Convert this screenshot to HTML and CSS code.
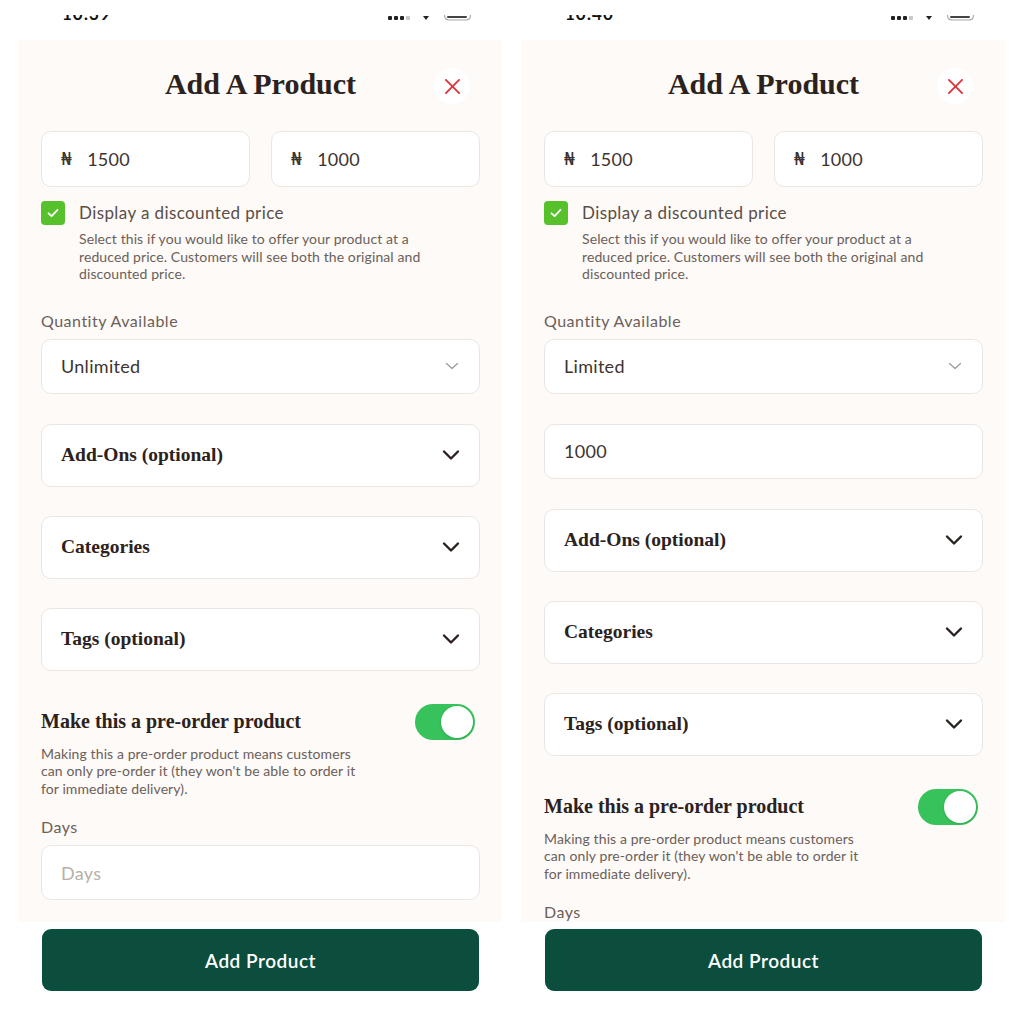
FILE: index.html
```html
<!DOCTYPE html>
<html>
<head>
<meta charset="UTF-8">
<title>Add A Product</title>
<link rel="stylesheet" href="styles.css">
</head>
<body>

<div class="screens">

   <!-- first screen: unlimited quantity -->
   <div class="screen">
      <div class="status">
         <div class="clock-clip"><span class="clock">10:39</span></div>
         <svg class="status-icons" width="90" height="22" viewBox="0 0 90 22">
            <rect x="0" y="16" width="4" height="4" rx="1" fill="#222"/>
            <rect x="6" y="16" width="4" height="4" rx="1" fill="#222"/>
            <rect x="12" y="16" width="4" height="4" rx="1" fill="#222"/>
            <rect x="18" y="16" width="4" height="4" rx="1" fill="#c8c8c8"/>
            <path d="M35 16 L41 16 L38 20 Z" fill="#222"/>
            <path d="M56.5 15 Q56.5 20 61 20 L78 20 Q82.5 20 82.5 15" fill="none" stroke="#aaa" stroke-width="1.2"/>
            <rect x="59" y="16" width="20" height="2" rx="1" fill="#444"/>
         </svg>
      </div>

      <div class="panel">
         <div class="header">
            <h1 class="title">Add A Product</h1>
            <button class="close">
               <svg width="18" height="18" viewBox="0 0 18 18"><path d="M2 2 L16 16 M16 2 L2 16" stroke="#e0353b" stroke-width="2" stroke-linecap="round"/></svg>
            </button>
         </div>

         <div class="prices">
            <div class="field"><span class="naira">₦</span>1500</div>
            <div class="field"><span class="naira">₦</span>1000</div>
         </div>

         <div class="check-row">
            <span class="checkbox">
               <svg width="14" height="14" viewBox="0 0 14 14"><path d="M2.5 7.3 L5.6 10.2 L11.5 3.8" fill="none" stroke="#fff" stroke-width="1.8" stroke-linecap="round" stroke-linejoin="round"/></svg>
            </span>
            <div>
               <div class="check-label">Display a discounted price</div>
               <p class="hint check-hint">Select this if you would like to offer your product at a reduced price. Customers will see both the original and discounted price.</p>
            </div>
         </div>

         <div class="label qty-label">Quantity Available</div>
         <div class="field select">
            <span>Unlimited</span>
            <svg width="14" height="8" viewBox="0 0 14 8"><path d="M1.5 1.5 L7 6.5 L12.5 1.5" fill="none" stroke="#9b9b9b" stroke-width="1.3" stroke-linecap="round" stroke-linejoin="round"/></svg>
         </div>

         <div class="accordion first">
            <span>Add-Ons (optional)</span>
            <svg width="18" height="12" viewBox="0 0 18 12"><path d="M2 2.5 L9 9.5 L16 2.5" fill="none" stroke="#2b2220" stroke-width="2.4" stroke-linecap="round" stroke-linejoin="round"/></svg>
         </div>
         <div class="accordion">
            <span>Categories</span>
            <svg width="18" height="12" viewBox="0 0 18 12"><path d="M2 2.5 L9 9.5 L16 2.5" fill="none" stroke="#2b2220" stroke-width="2.4" stroke-linecap="round" stroke-linejoin="round"/></svg>
         </div>
         <div class="accordion">
            <span>Tags (optional)</span>
            <svg width="18" height="12" viewBox="0 0 18 12"><path d="M2 2.5 L9 9.5 L16 2.5" fill="none" stroke="#2b2220" stroke-width="2.4" stroke-linecap="round" stroke-linejoin="round"/></svg>
         </div>

         <div class="preorder">
            <span class="preorder-title">Make this a pre-order product</span>
            <span class="toggle"><span class="knob"></span></span>
         </div>
         <p class="hint preorder-hint">Making this a pre-order product means customers can only pre-order it (they won't be able to order it for immediate delivery).</p>

         <div class="label days-label">Days</div>
         <div class="field placeholder">Days</div>
      </div>

      <button class="submit">Add Product</button>
   </div>

   <!-- second screen: limited quantity -->
   <div class="screen">
      <div class="status">
         <div class="clock-clip"><span class="clock">10:40</span></div>
         <svg class="status-icons" width="90" height="22" viewBox="0 0 90 22">
            <rect x="0" y="16" width="4" height="4" rx="1" fill="#222"/>
            <rect x="6" y="16" width="4" height="4" rx="1" fill="#222"/>
            <rect x="12" y="16" width="4" height="4" rx="1" fill="#222"/>
            <rect x="18" y="16" width="4" height="4" rx="1" fill="#c8c8c8"/>
            <path d="M35 16 L41 16 L38 20 Z" fill="#222"/>
            <path d="M56.5 15 Q56.5 20 61 20 L78 20 Q82.5 20 82.5 15" fill="none" stroke="#aaa" stroke-width="1.2"/>
            <rect x="59" y="16" width="20" height="2" rx="1" fill="#444"/>
         </svg>
      </div>

      <div class="panel">
         <div class="header">
            <h1 class="title">Add A Product</h1>
            <button class="close">
               <svg width="18" height="18" viewBox="0 0 18 18"><path d="M2 2 L16 16 M16 2 L2 16" stroke="#e0353b" stroke-width="2" stroke-linecap="round"/></svg>
            </button>
         </div>

         <div class="prices">
            <div class="field"><span class="naira">₦</span>1500</div>
            <div class="field"><span class="naira">₦</span>1000</div>
         </div>

         <div class="check-row">
            <span class="checkbox">
               <svg width="14" height="14" viewBox="0 0 14 14"><path d="M2.5 7.3 L5.6 10.2 L11.5 3.8" fill="none" stroke="#fff" stroke-width="1.8" stroke-linecap="round" stroke-linejoin="round"/></svg>
            </span>
            <div>
               <div class="check-label">Display a discounted price</div>
               <p class="hint check-hint">Select this if you would like to offer your product at a reduced price. Customers will see both the original and discounted price.</p>
            </div>
         </div>

         <div class="label qty-label">Quantity Available</div>
         <div class="field select">
            <span>Limited</span>
            <svg width="14" height="8" viewBox="0 0 14 8"><path d="M1.5 1.5 L7 6.5 L12.5 1.5" fill="none" stroke="#9b9b9b" stroke-width="1.3" stroke-linecap="round" stroke-linejoin="round"/></svg>
         </div>
         <div class="field qty-input">1000</div>

         <div class="accordion first">
            <span>Add-Ons (optional)</span>
            <svg width="18" height="12" viewBox="0 0 18 12"><path d="M2 2.5 L9 9.5 L16 2.5" fill="none" stroke="#2b2220" stroke-width="2.4" stroke-linecap="round" stroke-linejoin="round"/></svg>
         </div>
         <div class="accordion">
            <span>Categories</span>
            <svg width="18" height="12" viewBox="0 0 18 12"><path d="M2 2.5 L9 9.5 L16 2.5" fill="none" stroke="#2b2220" stroke-width="2.4" stroke-linecap="round" stroke-linejoin="round"/></svg>
         </div>
         <div class="accordion">
            <span>Tags (optional)</span>
            <svg width="18" height="12" viewBox="0 0 18 12"><path d="M2 2.5 L9 9.5 L16 2.5" fill="none" stroke="#2b2220" stroke-width="2.4" stroke-linecap="round" stroke-linejoin="round"/></svg>
         </div>

         <div class="preorder">
            <span class="preorder-title">Make this a pre-order product</span>
            <span class="toggle"><span class="knob"></span></span>
         </div>
         <p class="hint preorder-hint">Making this a pre-order product means customers can only pre-order it (they won't be able to order it for immediate delivery).</p>

         <div class="label days-label">Days</div>
         <div class="field placeholder">Days</div>
      </div>

      <button class="submit">Add Product</button>
   </div>

</div>

</body>
</html>
```

FILE: styles.css
```css
body {
   margin: 0;
   background: #fff;
   font-family: Lato, "Open Sans", sans-serif;
   color: #3d3330;
}

.screens {
   display: flex;
}

.screen {
   width: 503px;
   flex: none;
}

/* status bar, cut off at the top of the shot */
.status {
   height: 40px;
   display: flex;
   justify-content: space-between;
   padding: 0 25px 0 62px;
   box-sizing: border-box;
}

.clock-clip {
   margin-top: 15px;
   height: 6px;
   overflow: hidden;
}

.clock {
   display: block;
   margin-top: -10px;
   font-size: 17px;
   line-height: 17px;
   font-weight: 700;
   letter-spacing: 1px;
   color: #111;
}

/* scrolling sheet */
.panel {
   margin-left: 18px;
   width: 484px;
   height: 882px;
   overflow: hidden;
   background: #fdfaf7;
   padding: 28px 22px 0 23px;
   box-sizing: border-box;
}

.header {
   position: relative;
   text-align: center;
   height: 32px;
}

.title {
   margin: 0;
   font-family: "Liberation Serif", serif;
   font-weight: 700;
   font-size: 30px;
   line-height: 32px;
   color: #2b2220;
}

.close {
   position: absolute;
   right: 10px;
   top: 0;
   width: 36px;
   height: 36px;
   border: none;
   border-radius: 50%;
   background: #fff;
   display: flex;
   align-items: center;
   justify-content: center;
   padding: 0;
}

.close svg {
   width: 17px;
   height: 17px;
}

.field {
   background: #fff;
   border: 1px solid #ebe6e1;
   border-radius: 10px;
   height: 56px;
   box-sizing: border-box;
   padding: 0 19px;
   display: flex;
   align-items: center;
   font-size: 18px;
   letter-spacing: 0.3px;
   color: #3d3330;
}

.prices {
   display: flex;
   gap: 21px;
   margin-top: 31px;
}

.prices .field {
   flex: 1;
}

.naira {
   font-family: "DejaVu Sans", sans-serif;
   font-size: 17px;
   color: #3d3330;
   margin-right: 15px;
}

.check-row {
   display: flex;
   gap: 14px;
   margin-top: 14px;
}

.checkbox {
   flex: none;
   width: 24px;
   height: 24px;
   border-radius: 4px;
   background: #56c12a;
   display: flex;
   align-items: center;
   justify-content: center;
}

.check-label {
   font-size: 17px;
   line-height: 24px;
   letter-spacing: 0.4px;
   color: #5a4e48;
}

.hint {
   margin: 5px 0 0;
   font-size: 14px;
   line-height: 17.5px;
   letter-spacing: 0.1px;
   color: #6b605a;
}

.check-hint {
   width: 362px;
}

.label {
   font-size: 16px;
   line-height: 20px;
   letter-spacing: 0.5px;
   color: #6b605a;
}

.qty-label {
   margin-top: 28px;
}

.select {
   margin-top: 8px;
   height: 55px;
   justify-content: space-between;
}

.select svg {
   margin-right: 1px;
}

.qty-input {
   margin-top: 30px;
   height: 55px;
}

.accordion {
   background: #fff;
   border: 1px solid #ebe6e1;
   border-radius: 10px;
   height: 63px;
   box-sizing: border-box;
   padding: 0 19px;
   margin-top: 29px;
   display: flex;
   align-items: center;
   justify-content: space-between;
   font-family: "Liberation Serif", serif;
   font-weight: 700;
   font-size: 19.5px;
   color: #2b2220;
}

.accordion.first {
   margin-top: 30px;
}

.preorder {
   margin-top: 33px;
   height: 36px;
   display: flex;
   align-items: center;
   justify-content: space-between;
}

.preorder-title {
   font-family: "Liberation Serif", serif;
   font-weight: 700;
   font-size: 20px;
   color: #2b2220;
}

.toggle {
   width: 60px;
   height: 36px;
   border-radius: 18px;
   background: #38c25c;
   margin-right: 5px;
   display: flex;
   align-items: center;
   justify-content: flex-end;
   padding: 2px;
   box-sizing: border-box;
}

.knob {
   width: 32px;
   height: 32px;
   border-radius: 50%;
   background: #fff;
   box-shadow: 0 1px 3px rgba(0, 0, 0, 0.15);
}

.preorder-hint {
   width: 334px;
}

.days-label {
   margin-top: 20px;
}

.placeholder {
   margin-top: 8px;
   height: 55px;
   color: #b8afa9;
}

.submit {
   display: block;
   margin: 7px 0 0 42px;
   width: 437px;
   height: 62px;
   border: none;
   border-radius: 9px;
   background: #0c4e3d;
   color: #fff;
   font-family: Lato, sans-serif;
   font-size: 19px;
   font-weight: 600;
   letter-spacing: 0.5px;
}
```
